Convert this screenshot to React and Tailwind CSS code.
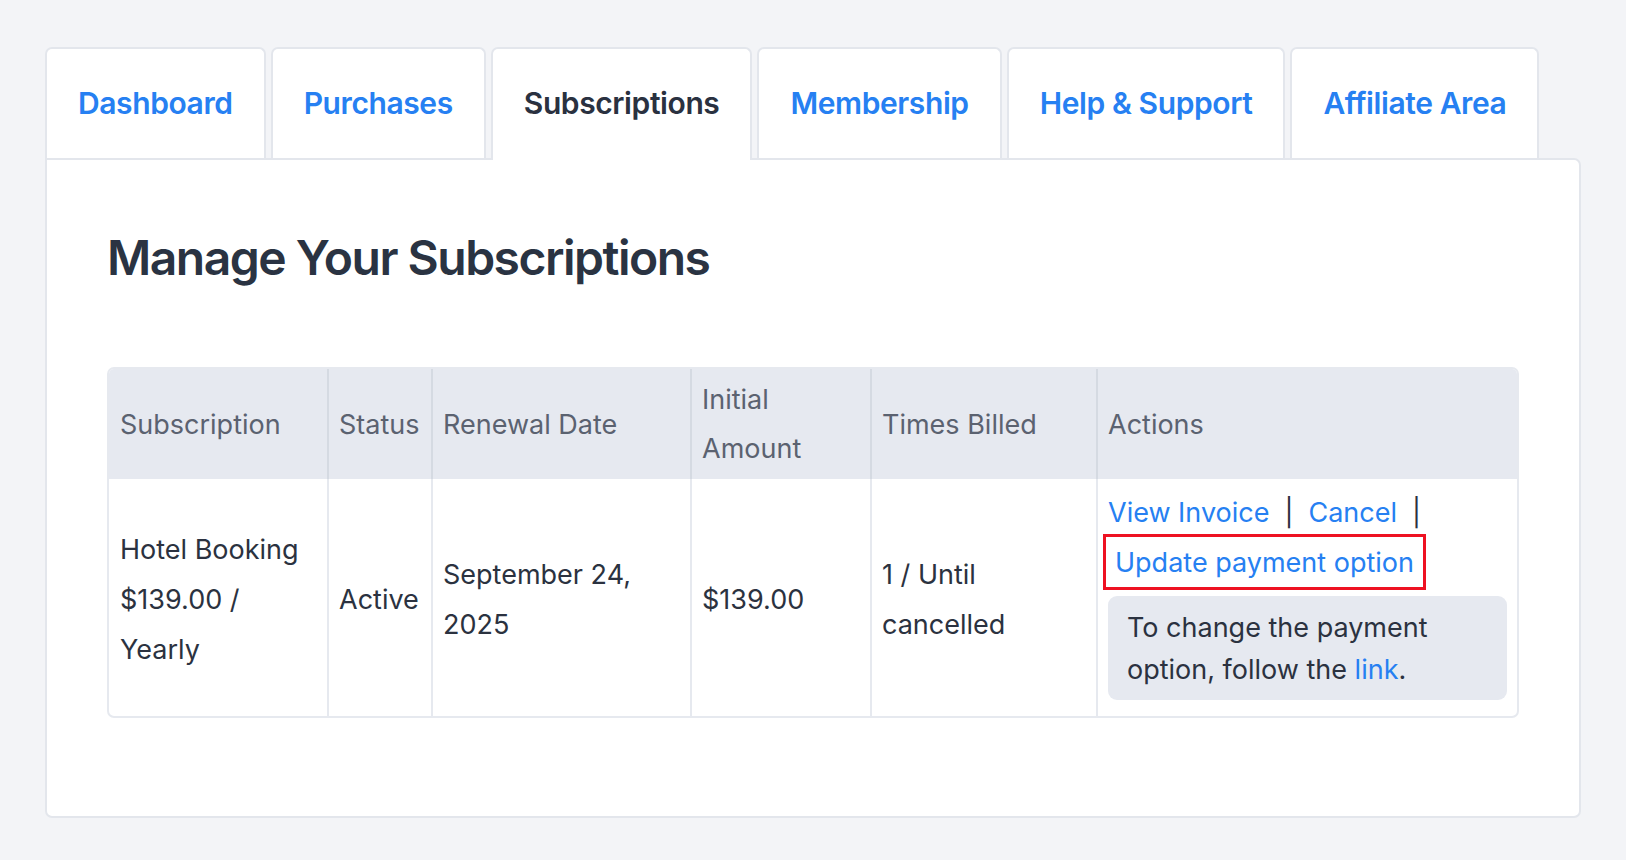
const tabs = [
  "Dashboard",
  "Purchases",
  "Subscriptions",
  "Membership",
  "Help & Support",
  "Affiliate Area",
];

const active = "Subscriptions";

function Tab({ label }) {
  if (label === active) {
    return (
      <div className="relative z-10 -mb-[2px] flex h-[113px] items-center rounded-t-[7px] border-2 border-b-0 border-[#e3e6ec] bg-white px-[31px] pb-[2px] text-[30px] font-semibold tracking-[-0.4px] text-[#2a3140]">
        {label}
      </div>
    );
  }
  return (
    <a
      href="#"
      className="flex h-[111px] items-center rounded-t-[7px] border-2 border-b-0 border-[#e3e6ec] bg-white px-[31px] text-[30px] font-semibold tracking-[-0.4px] text-[#2680f2]"
    >
      {label}
    </a>
  );
}

export default function App() {
  return (
    <div className="min-h-screen bg-[#f3f4f7] px-[45px] pt-[47px] pb-[44px] [font-family:Inter,sans-serif]">
      <nav className="flex items-end gap-[5px]">
        {tabs.map((t) => (
          <Tab key={t} label={t} />
        ))}
      </nav>

      <section className="rounded-[7px] rounded-tl-none border-2 border-[#e3e6ec] bg-white px-[60px] pt-[69px] pb-[98px]">
        <h1 className="text-[48px] leading-[58px] font-semibold tracking-[-1.5px] text-[#2a3342]">
          Manage Your Subscriptions
        </h1>

        <div className="mt-[80px] overflow-hidden rounded-[7px] border-2 border-[#e6e9ef]">
          <table className="w-full table-fixed border-separate border-spacing-0 text-[27px]">
            <colgroup>
              <col className="w-[218px]" />
              <col className="w-[104px]" />
              <col className="w-[259px]" />
              <col className="w-[180px]" />
              <col className="w-[226px]" />
              <col />
            </colgroup>
            <thead>
              <tr className="h-[110px] bg-[#e6e9f0] text-left text-[#5b6270]">
                <th className="px-[11px] align-middle font-normal leading-[49px]">Subscription</th>
                <th className="border-l-2 border-[#d5dae2] px-[10px] align-middle font-normal leading-[49px]">Status</th>
                <th className="border-l-2 border-[#d5dae2] px-[10px] align-middle font-normal leading-[49px]">Renewal Date</th>
                <th className="border-l-2 border-[#d5dae2] px-[10px] align-middle font-normal leading-[49px]">Initial Amount</th>
                <th className="border-l-2 border-[#d5dae2] px-[10px] align-middle font-normal leading-[49px]">Times Billed</th>
                <th className="border-l-2 border-[#d5dae2] px-[10px] align-middle font-normal leading-[49px]">Actions</th>
              </tr>
            </thead>
            <tbody>
              <tr className="h-[235px] text-[#2b3240]">
                <td className="px-[11px] pt-[5px] align-middle leading-[50px]">Hotel Booking $139.00 / Yearly</td>
                <td className="border-l-2 border-[#e6e9ef] px-[10px] pt-[5px] align-middle leading-[50px]">Active</td>
                <td className="border-l-2 border-[#e6e9ef] px-[10px] pt-[5px] align-middle leading-[50px]">September 24, 2025</td>
                <td className="border-l-2 border-[#e6e9ef] px-[10px] pt-[5px] align-middle leading-[50px]">$139.00</td>
                <td className="border-l-2 border-[#e6e9ef] px-[10px] pt-[5px] align-middle leading-[50px]">1 / Until cancelled</td>
                <td className="border-l-2 border-[#e6e9ef] px-[10px] pt-[9px] pb-[16px] align-top">
                  <div className="leading-[50px]">
                    <a href="#" className="text-[#2680f2]">View Invoice</a>
                    <span className="mx-[15px]">|</span>
                    <a href="#" className="text-[#2680f2]">Cancel</a>
                    <span className="mx-[15px]">|</span>
                  </div>
                  <div className="-mt-[4px]">
                    <a
                      href="#"
                      className="-ml-[5px] inline-block border-[3px] border-[#ee1122] px-[9px] pt-[1px] leading-[49px] text-[#2680f2]"
                    >
                      Update payment option
                    </a>
                  </div>
                  <div className="mt-[6px] rounded-[9px] bg-[#e6e9f0] px-[19px] pt-[11px] pb-[9px] leading-[42px] text-[#2b3240]">
                    To change the payment option, follow the{" "}
                    <a href="#" className="text-[#2680f2]">link</a>.
                  </div>
                </td>
              </tr>
            </tbody>
          </table>
        </div>
      </section>
    </div>
  );
}
